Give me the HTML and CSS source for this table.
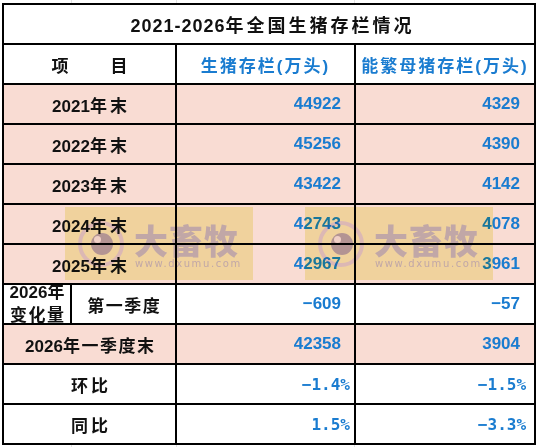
FILE: index.html
```html
<!DOCTYPE html>
<html lang="zh-CN">
<head>
<meta charset="utf-8">
<title>2021-2026年全国生猪存栏情况</title>
<link rel="stylesheet" href="styles.css">
</head>
<body>
<div class="wrap">
<table class="sheet">
  <colgroup>
    <col class="c-a"><col class="c-b"><col class="c-c"><col class="c-d">
  </colgroup>
  <tr class="title">
    <td colspan="4">2021-2026<span class="cj">年全国生猪存栏情况</span></td>
  </tr>
  <tr class="head">
    <td colspan="2" class="lbl"><span class="cj">项</span><span class="gap"></span><span class="cj">目</span></td>
    <td class="hd">生猪存栏(万头)</td>
    <td class="hd">能繁母猪存栏(万头)</td>
  </tr>
  <tr class="pink">
    <td colspan="2" class="lbl">2021<span class="cj">年末</span></td>
    <td class="num n2">44922</td><td class="num n3">4329</td>
  </tr>
  <tr class="pink">
    <td colspan="2" class="lbl">2022<span class="cj">年末</span></td>
    <td class="num n2">45256</td><td class="num n3">4390</td>
  </tr>
  <tr class="pink">
    <td colspan="2" class="lbl">2023<span class="cj">年末</span></td>
    <td class="num n2">43422</td><td class="num n3">4142</td>
  </tr>
  <tr class="pink">
    <td colspan="2" class="lbl">2024<span class="cj">年末</span></td>
    <td class="num n2">42743</td><td class="num n3">4078</td>
  </tr>
  <tr class="pink">
    <td colspan="2" class="lbl">2025<span class="cj">年末</span></td>
    <td class="num n2">42967</td><td class="num n3">3961</td>
  </tr>
  <tr>
    <td class="lbl small"><div class="clip"><div>2026<span class="cj1">年</span></div><div class="cj1">变化量</div></div></td>
    <td class="lbl"><span class="cj1">第一季度</span></td>
    <td class="num n2">−609</td><td class="num n3">−57</td>
  </tr>
  <tr class="pink">
    <td colspan="2" class="lbl">2026<span class="cj1">年一季度末</span></td>
    <td class="num n2">42358</td><td class="num n3">3904</td>
  </tr>
  <tr>
    <td colspan="2" class="lbl"><span class="cj">环比</span></td>
    <td class="pct p2">−1.4%</td><td class="pct p3">−1.5%</td>
  </tr>
  <tr>
    <td colspan="2" class="lbl"><span class="cj">同比</span></td>
    <td class="pct p2">1.5%</td><td class="pct p3">−3.3%</td>
  </tr>
</table>

<div class="mark mark-1">
  <svg class="eye" width="48" height="48" viewBox="0 0 48 48">
    <circle cx="24" cy="24" r="21" fill="none" stroke="#e2d6da" stroke-width="4"/>
    <circle cx="25" cy="24" r="11" fill="#b8acb2"/>
    <circle cx="20.5" cy="19.5" r="3.5" fill="#f6f0f0"/>
  </svg>
  <div class="brand">
    <div class="brand-cn">大畜牧</div>
    <div class="brand-url">www.dxumu.com</div>
  </div>
</div>
<div class="mark mark-2">
  <svg class="eye" width="48" height="48" viewBox="0 0 48 48">
    <circle cx="24" cy="24" r="21" fill="none" stroke="#e2d6da" stroke-width="4"/>
    <circle cx="25" cy="24" r="11" fill="#b8acb2"/>
    <circle cx="20.5" cy="19.5" r="3.5" fill="#f6f0f0"/>
  </svg>
  <div class="brand">
    <div class="brand-cn">大畜牧</div>
    <div class="brand-url">www.dxumu.com</div>
  </div>
</div>
</div>
</body>
</html>
```

FILE: styles.css
```css
html, body {
  margin: 0;
  padding: 0;
}
body {
  width: 537px;
  height: 447px;
  overflow: hidden;
  background-color: #ffffff;
  background-image:
    linear-gradient(to right, transparent 71px, #e3e3e3 71px, #e3e3e3 72px, transparent 72px),
    linear-gradient(to right, transparent 176px, #e3e3e3 176px, #e3e3e3 177px, transparent 177px),
    linear-gradient(to right, transparent 354px, #e3e3e3 354px, #e3e3e3 355px, transparent 355px);
  font-family: "Liberation Sans", "Noto Sans CJK SC", sans-serif;
  font-weight: bold;
}
.wrap {
  position: relative;
  padding: 3px 0 0 2px;
}
.sheet {
  border-collapse: collapse;
  table-layout: fixed;
  width: 534px;
  border: 2px solid #000;
}
.c-a { width: 68px; }
.c-b { width: 105px; }
.c-c { width: 179px; }
.c-d { width: 180px; }

.sheet td {
  border: 2px solid #000;
  height: 38px;
  padding: 0;
  background: #ffffff;
  font-size: 17px;
  color: #111;
  white-space: nowrap;
  overflow: hidden;
}
.sheet tr.pink td {
  background: #f9dcd3;
}
.sheet .title td {
  text-align: center;
  font-size: 18px;
  letter-spacing: 1px;
  padding-left: 4px;
}
.title .cj {
  letter-spacing: 3px;
}
.sheet .lbl {
  text-align: center;
}
.cj {
  letter-spacing: 3px;
  margin-right: -3px;
}
.cj1 {
  letter-spacing: 1.5px;
  margin-right: -1.5px;
}
.gap {
  display: inline-block;
  width: 42px;
}
.sheet .hd {
  text-align: center;
  color: #1a7cd0;
  letter-spacing: 2px;
}
.sheet .num {
  text-align: right;
  color: #1a7cd0;
}
.sheet .n2 { padding-right: 13px; }
.sheet .n3 { padding-right: 14px; }
.sheet .pct {
  text-align: right;
  color: #1a7cd0;
  font-family: "DejaVu Sans Mono", monospace;
  font-size: 16px;
}
.sheet .p2 { padding-right: 4px; }
.sheet .p3 { padding-right: 8px; }

.small .clip {
  height: 38px;
  overflow: hidden;
  display: flex;
  flex-direction: column;
  justify-content: center;
  line-height: 23px;
}

.mark {
  position: absolute;
  top: 207px;
  width: 188px;
  height: 73px;
  background: rgb(246, 244, 190);
  mix-blend-mode: multiply;
  display: flex;
  align-items: center;
  padding-left: 12px;
  box-sizing: border-box;
  gap: 9px;
}
.mark-1 { left: 65px; }
.mark-2 { left: 305px; }
.eye {
  flex: none;
}
.brand {
  display: flex;
  flex-direction: column;
  align-items: flex-start;
  color: rgb(198, 194, 202);
  margin-top: 4px;
}
.brand-cn {
  font-family: "Noto Sans CJK SC", sans-serif;
  font-weight: 900;
  font-size: 34px;
  line-height: 36px;
  letter-spacing: 1px;
}
.brand-url {
  font-family: "DejaVu Sans", sans-serif;
  font-weight: normal;
  font-size: 10px;
  line-height: 12px;
  letter-spacing: 1.6px;
  margin-left: 1px;
}
```
